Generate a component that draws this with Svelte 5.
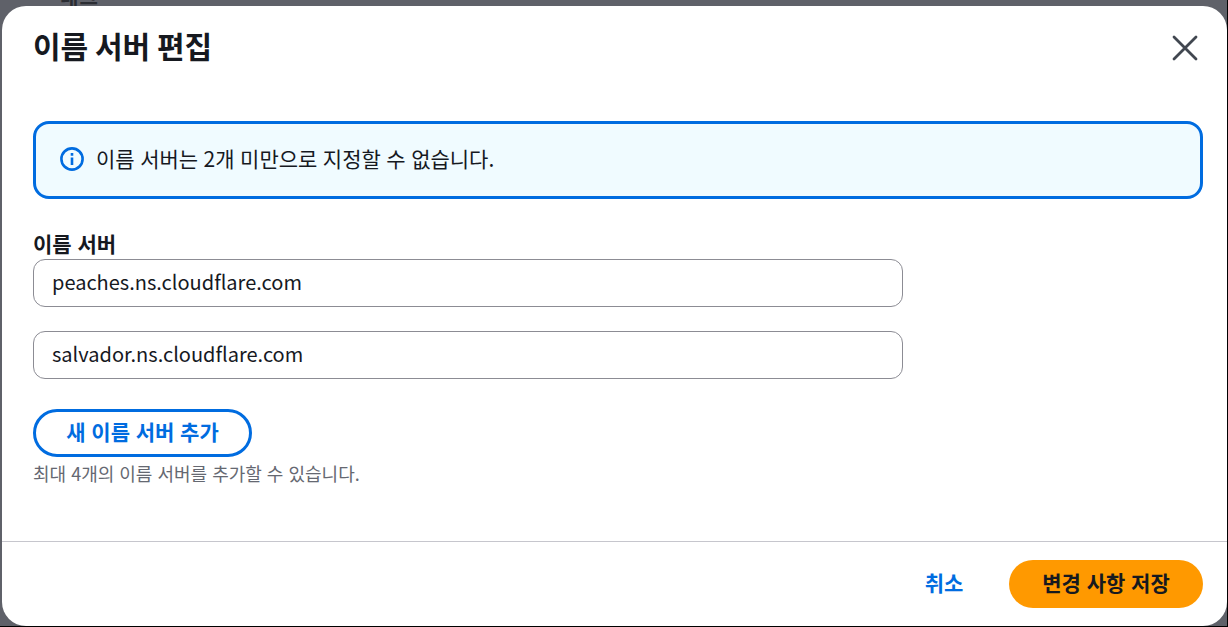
<script lang="ts">
  // Boîte de dialogue « modifier les serveurs de noms ».
  let servers = $state(['peaches.ns.cloudflare.com', 'salvador.ns.cloudflare.com']);
</script>

<div class="screen">
  <div class="backdrop-text" aria-hidden="true">태그</div>
  <div class="modal" role="dialog" aria-labelledby="modal-title">
    <header class="modal__head">
      <h2 id="modal-title">이름 서버 편집</h2>
      <button class="close" type="button" aria-label="닫기">
        <svg width="28" height="28" viewBox="0 0 28 28" fill="none" stroke="#414750" stroke-width="2.8" stroke-linecap="round">
          <path d="M3 3 L25 25 M25 3 L3 25" />
        </svg>
      </button>
    </header>

    <div class="modal__body">
      <div class="alert">
        <svg class="alert__icon" width="24" height="24" viewBox="0 0 24 24" fill="none">
          <circle cx="12" cy="12" r="10.6" stroke="#006ce0" stroke-width="2.6" />
          <path d="M12 10.5 V18" stroke="#006ce0" stroke-width="2.6" />
          <path d="M12 6 V8.8" stroke="#006ce0" stroke-width="2.6" />
        </svg>
        <span class="alert__text">이름 서버는 2개 미만으로 지정할 수 없습니다.</span>
      </div>

      <div class="field">
        <label for="ns-0">이름 서버</label>
        <div class="inputs">
          {#each servers as server, i}
            <input id={'ns-' + i} type="text" bind:value={servers[i]} />
          {/each}
        </div>
      </div>

      <button class="add" type="button">새 이름 서버 추가</button>
      <p class="hint">최대 4개의 이름 서버를 추가할 수 있습니다.</p>
    </div>

    <footer class="modal__foot">
      <button class="cancel" type="button">취소</button>
      <button class="save" type="button">변경 사항 저장</button>
    </footer>
  </div>
</div>

<style>
  :global(body) {
    margin: 0;
    background: #5f6169;
  }
  .screen {
    position: relative;
    box-sizing: border-box;
    width: 1228px;
    height: 627px;
    padding: 6px 0 0 2px;
    background: #5f6169;
    border-right: 1px solid #000;
    border-bottom: 1px solid #000;
    overflow: hidden;
    font-family: 'Noto Sans CJK KR', 'Noto Sans', sans-serif;
    color: #16191f;
  }
  .backdrop-text {
    position: absolute;
    top: -18px;
    left: 60px;
    font-size: 20px;
    font-weight: 700;
    letter-spacing: 1px;
    color: #2b2d33;
  }
  .modal {
    position: relative;
    box-sizing: border-box;
    height: 100%;
    display: flex;
    flex-direction: column;
    background: #fff;
    border-radius: 24px;
    overflow: hidden;
  }
  .modal__head {
    display: flex;
    justify-content: space-between;
    align-items: flex-start;
    padding: 17px 28px 0 31px;
    height: 115px;
    box-sizing: border-box;
    flex: none;
  }
  h2 {
    margin: 0;
    font-size: 30px;
    line-height: 44px;
    font-weight: 700;
    color: #16191f;
  }
  .close {
    display: flex;
    padding: 0;
    margin-top: 11px;
    border: 0;
    background: none;
  }
  .modal__body {
    flex: 1;
    padding: 0 24px 0 31px;
  }
  .alert {
    box-sizing: border-box;
    height: 78px;
    display: flex;
    align-items: center;
    gap: 12px;
    padding: 0 24px 2px;
    background: #f0fbff;
    border: 3px solid #006ce0;
    border-radius: 16px;
    font-size: 21px;
    word-spacing: 0.8px;
  }
  .alert__icon {
    flex: none;
  }
  .alert__text {
    line-height: 28px;
    margin-top: -2px;
  }
  .field {
    margin-top: 28px;
    width: 870px;
  }
  label {
    display: block;
    font-size: 21px;
    line-height: 30px;
    font-weight: 700;
    word-spacing: 1px;
    position: relative;
    top: 1px;
  }
  .inputs {
    display: flex;
    flex-direction: column;
    gap: 24px;
    margin-top: 2px;
  }
  input {
    box-sizing: border-box;
    width: 100%;
    height: 48px;
    padding: 0 18px 3px;
    border: 1px solid #8c8c94;
    border-radius: 12px;
    font: inherit;
    font-size: 20px;
    color: #16191f;
    background: #fff;
    outline: none;
  }
  .add {
    display: block;
    box-sizing: border-box;
    width: 219px;
    height: 48px;
    margin-top: 30px;
    padding: 0 0 4px;
    border: 3px solid #006ce0;
    border-radius: 24px;
    background: #fff;
    color: #006ce0;
    font: inherit;
    font-size: 21px;
    font-weight: 700;
    word-spacing: 1px;
  }
  .hint {
    margin: 3px 0 0;
    font-size: 18px;
    line-height: 26px;
    color: #656871;
    word-spacing: 1px;
  }
  .modal__foot {
    flex: none;
    box-sizing: border-box;
    height: 85px;
    display: flex;
    align-items: center;
    justify-content: flex-end;
    gap: 25px;
    padding: 0 24px 0 0;
    border-top: 1px solid #c6c6cd;
  }
  .cancel,
  .save {
    height: 48px;
    border: 0;
    padding: 0 0 4px;
    font: inherit;
    font-size: 21px;
    font-weight: 700;
  }
  .cancel {
    width: 80px;
    background: none;
    color: #006ce0;
  }
  .save {
    width: 194px;
    border-radius: 24px;
    background: #ff9900;
    color: #16191f;
    word-spacing: 1px;
  }
</style>
